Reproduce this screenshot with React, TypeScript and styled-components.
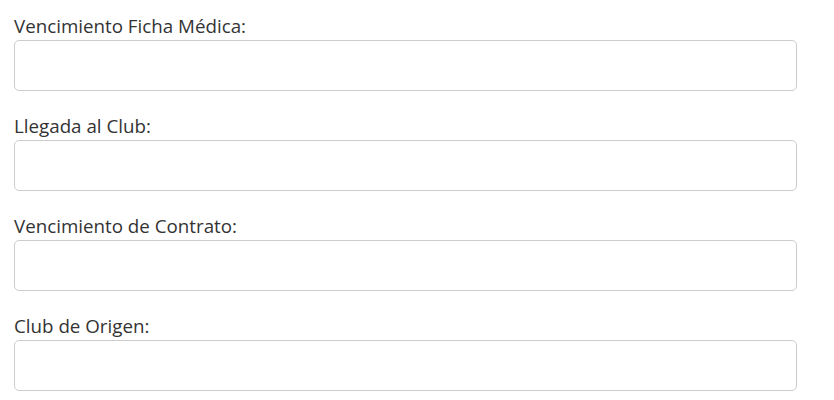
import styled, { createGlobalStyle } from "styled-components";

const GlobalStyle = createGlobalStyle`
  body {
    margin: 0;
    background: #ffffff;
    font-family: "Open Sans", "Liberation Sans", sans-serif;
  }
`;

const Form = styled.form`
  display: flex;
  flex-direction: column;
  gap: 22px;
  padding: 13px 0 0 14px;
  width: 783px;
`;

const Field = styled.div`
  display: flex;
  flex-direction: column;
  gap: 2px;
`;

const Label = styled.label`
  font-size: 18.75px;
  line-height: 25px;
  color: #333333;
`;

const Input = styled.input`
  box-sizing: border-box;
  height: 51px;
  width: 100%;
  border: 1px solid #cccccc;
  border-radius: 5px;
  background: #ffffff;
  padding: 6px 12px;
  font-family: inherit;
  font-size: 18px;
  color: #333333;
  outline: none;
`;

const fields = [
  "Vencimiento Ficha Médica:",
  "Llegada al Club:",
  "Vencimiento de Contrato:",
  "Club de Origen:",
];

function App() {
  return (
    <>
      <GlobalStyle />
      <Form>
        {fields.map((label, i) => (
          <Field key={label}>
            <Label htmlFor={`f${i}`}>{label}</Label>
            <Input id={`f${i}`} type="text" />
          </Field>
        ))}
      </Form>
    </>
  );
}

export default App;
